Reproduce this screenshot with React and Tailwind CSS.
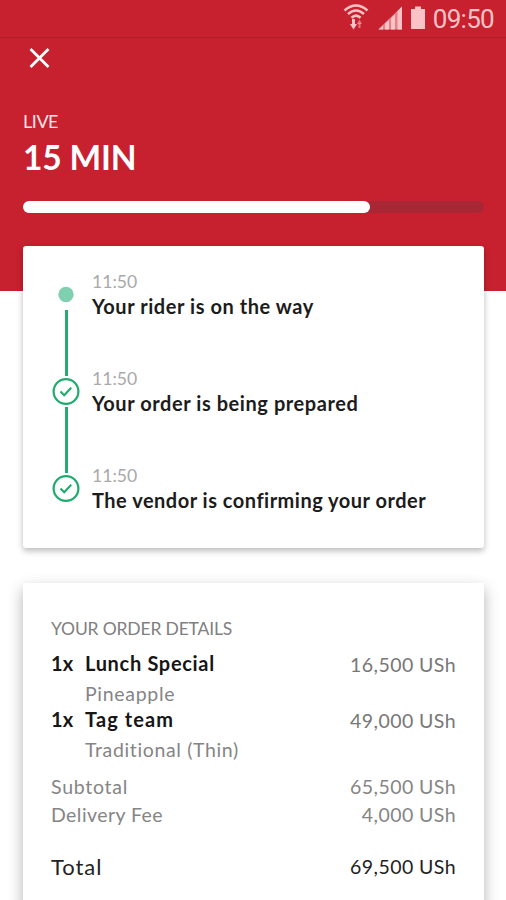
const STEPS = [
  { time: "11:50", title: "Your rider is on the way", done: false, tracking: "tracking-[0.560px]" },
  { time: "11:50", title: "Your order is being prepared", done: true, tracking: "tracking-[0.570px]" },
  { time: "11:50", title: "The vendor is confirming your order", done: true, tracking: "tracking-[0.5px]" },
];

function StatusBar() {
  return (
    <div className="flex h-[38px] items-start justify-end border-b border-[#b01d2b] pr-[12px] text-[#fbc3c6]">
      <svg className="mt-[4px] h-[27px] w-[26px]" viewBox="0 0 26 27" fill="none" stroke="currentColor">
        <path d="M1.500 6.500Q13 -3.500 24.500 6.500" strokeWidth="2.600" />
        <path d="M5 10Q13 3 21 10" strokeWidth="2.500" />
        <path d="M8.500 13.800Q13 9.500 17.500 13.800" strokeWidth="2.600" />
        <path d="M10.500 15v6" strokeWidth="3" />
        <path d="M7 20h7l-3.500 5.500z" fill="currentColor" stroke="none" />
        <path d="M16.500 24v-5" strokeWidth="2" opacity=".5" />
        <path d="M13.800 20l2.700-4.500 2.700 4.500z" fill="currentColor" stroke="none" opacity=".5" />
      </svg>
      <svg className="mt-[6px] ml-[9px] h-[24px] w-[25px]" viewBox="0 0 25 24" fill="currentColor">
        <path opacity=".6" d="M0 23.500L24 .5v23z" />
        <path d="M1 23.500l4-4v4zM7 17.500l4-3.800v9.800H7zM13 12.200l4-4.200v15.500h-4zM19.500 5L24 .5v23h-4.500z" />
      </svg>
      <svg className="mt-[6px] ml-[7px] h-[24px] w-[16px]" viewBox="0 0 16 24" fill="currentColor">
        <path d="M5 .5h6v2.500h4v20H1V3h4z" />
      </svg>
      <span className="ml-[7px] font-[Roboto] text-[26px] leading-[39px] tracking-[-0.700px]">09:50</span>
    </div>
  );
}

function Step({ step, last }) {
  return (
    <li className="flex h-[97px]">
      <div className="flex w-[28px] flex-col items-center pt-[9px]">
        <svg className="h-[27px] w-[28px] shrink-0" viewBox="0 0 28 27" fill="none">
          {step.done ? (
            <>
              <circle cx="14" cy="13.500" r="12.400" stroke="#1eab6c" strokeWidth="2.200" />
              <path d="M8.500 13.500l3.700 3.700 7-7.500" stroke="#1eab6c" strokeWidth="2.100" />
            </>
          ) : (
            <circle cx="14" cy="13.500" r="7.700" fill="#7fd0b0" />
          )}
        </svg>
        {!last && <div className="mt-[2px] ml-[1px] h-[66px] w-[3px] shrink-0 bg-[#27ab70]" />}
      </div>
      <div className="ml-[12px] flex flex-col whitespace-nowrap">
        <span className="text-[17.600px] leading-[20px] text-[#a9a9a9]">{step.time}</span>
        <span className={`text-[20px] leading-[28px] font-bold text-[#1c1c1c] ${step.tracking}`}>{step.title}</span>
      </div>
    </li>
  );
}

function Item({ name, nameTracking, option, optionTracking, price }) {
  return (
    <div className="flex h-[55.500px] justify-between">
      <div className="flex">
        <span className="w-[34px] text-[20px] leading-[28px] font-bold tracking-[0.100px] text-[#161616]">1x</span>
        <div className="flex flex-col">
          <span className={`text-[20px] leading-[28px] font-bold text-[#161616] ${nameTracking}`}>{name}</span>
          <span className={`text-[19.500px] leading-[33px] text-[#858585] ${optionTracking}`}>{option}</span>
        </div>
      </div>
      <Price className="text-[19.500px] leading-[32px] text-[#777]">{price}</Price>
    </div>
  );
}

function Price({ className = "", children }) {
  return <span className={`tracking-[0.430px] ${className}`}>{children}</span>;
}

export default function App() {
  return (
    <main className="h-[900px] w-[506px] overflow-hidden bg-white font-[Lato,sans-serif]">
      <header className="h-[291px] bg-[#c7202f]">
        <StatusBar />
        <div className="flex flex-col px-[23px] pt-[10px] text-white">
          <svg className="ml-[6px] h-[20px] w-[21px]" viewBox="0 0 21 20" fill="none" stroke="currentColor" strokeWidth="2.800">
            <path d="M1.500 1l18 18M19.500 1l-18 18" />
          </svg>
          <span className="mt-[41px] text-[18px] leading-[24px] tracking-[-0.450px] text-[#fce4e5]">LIVE</span>
          <h1 className="mt-[2px] text-[33.500px] leading-[44px] font-bold tracking-[-0.150px]">15 MIN</h1>
          <div className="mt-[22px] h-[12px] w-[461px] rounded-full bg-[#a92735]">
            <div className="h-[12px] w-[347px] rounded-full bg-white" />
          </div>
        </div>
      </header>

      <section className="relative -mt-[45px] ml-[23px] h-[302px] w-[461px] rounded-[3px] bg-white pt-[26px] pl-[29px] shadow-[0_3px_6px_rgba(0,0,0,0.27)]">
        <ol>
          {STEPS.map((step, i) => (
            <Step key={step.title} step={step} last={i === STEPS.length - 1} />
          ))}
        </ol>
      </section>

      <section className="mt-[35px] ml-[23px] h-[360px] w-[461px] bg-white px-[28px] pt-[34px] shadow-[0_6px_14px_rgba(0,0,0,0.3)]">
        <h2 className="text-[17.500px] leading-[24px] tracking-[-0.170px] text-[#808080]">YOUR ORDER DETAILS</h2>
        <div className="mt-[8px]">
          <Item
            name="Lunch Special"
            nameTracking="tracking-[0.680px]"
            option="Pineapple"
            optionTracking="tracking-[0.700px]"
            price="16,500 USh"
          />
          <Item
            name="Tag team"
            nameTracking="tracking-[1.100px]"
            option="Traditional (Thin)"
            optionTracking="tracking-[0.640px]"
            price="49,000 USh"
          />
        </div>
        <div className="mt-[13px] flex justify-between text-[19.500px] leading-[27.500px] text-[#858585]">
          <span className="tracking-[0.750px]">Subtotal</span>
          <Price>65,500 USh</Price>
        </div>
        <div className="flex justify-between text-[19.500px] leading-[27.500px] text-[#858585]">
          <span className="tracking-[0.430px]">Delivery Fee</span>
          <Price>4,000 USh</Price>
        </div>
        <div className="mt-[21px] flex justify-between leading-[36px] text-[#222]">
          <span className="text-[22px] tracking-[0.950px]">Total</span>
          <Price className="text-[19.500px]">69,500 USh</Price>
        </div>
      </section>
    </main>
  );
}
